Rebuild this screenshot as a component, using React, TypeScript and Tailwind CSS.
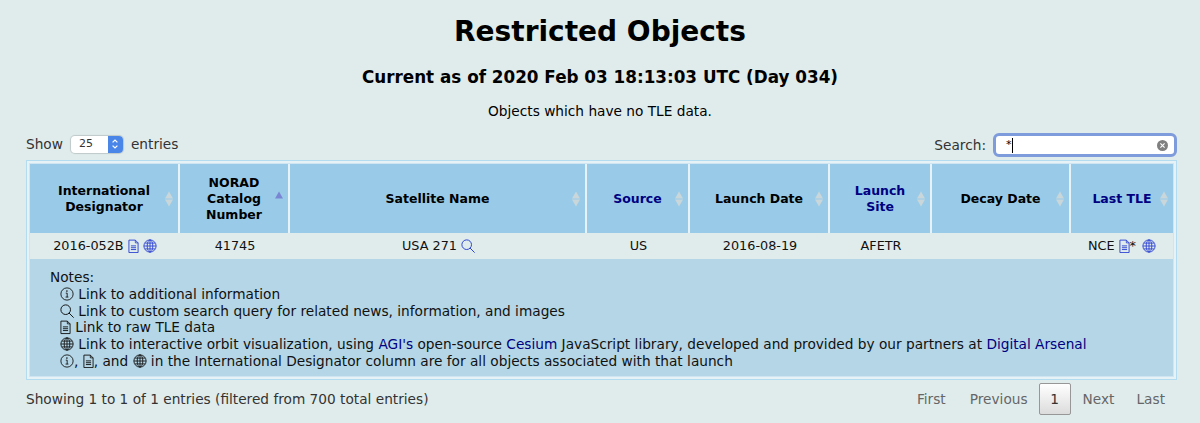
const FONT = "font-['DejaVu_Sans','Liberation_Sans',sans-serif]";

function DocIcon({ className = "" }: { className?: string }) {
  return (
    <svg viewBox="2 0 12 16" width="11" height="14.7" fill="none" className={`inline-block ${className}`} stroke="currentColor">
      <path d="M3 1.2h7l3 3v10.6H3z" strokeWidth="1" />
      <path d="M10 1.2v3h3" strokeWidth="0.9" />
      <path d="M5.2 7.5h5.6M5.2 9.5h5.6M5.2 11.5h5.6" strokeWidth="1" />
    </svg>
  );
}
function GlobeIcon({ className = "" }: { className?: string }) {
  return (
    <svg viewBox="0 0 16 16" width="14" height="14" fill="none" className={`inline-block ${className}`} stroke="currentColor" strokeWidth="1">
      <circle cx="8" cy="8" r="7" />
      <ellipse cx="8" cy="8" rx="3.2" ry="7" />
      <path d="M8 1v14M1 8h14M2.2 4.7h11.6M2.2 11.3h11.6" />
    </svg>
  );
}
function SearchIcon({ className = "" }: { className?: string }) {
  return (
    <svg viewBox="0 0 16 16" width="14" height="14" fill="none" className={`inline-block ${className}`} stroke="currentColor" strokeWidth="1.1">
      <circle cx="6.5" cy="6.5" r="5.5" />
      <path d="M10.5 10.5l4.8 4.8" strokeLinecap="round" />
    </svg>
  );
}
function InfoIcon({ className = "" }: { className?: string }) {
  return (
    <svg viewBox="0 0 16 16" width="14" height="14" fill="none" className={`inline-block ${className}`} stroke="currentColor" strokeWidth="1">
      <circle cx="8" cy="8" r="7" />
      <path d="M6.6 7h1.6v4.4M6.4 11.5h3.2" />
      <circle cx="7.9" cy="4.7" r=".9" fill="currentColor" stroke="none" />
    </svg>
  );
}
function SortIcon({ active }: { active?: boolean }) {
  return (
    <span className="absolute top-1/2 right-[5px] flex -translate-y-1/2 flex-col gap-[1px]">
      <span className={`h-0 w-0 border-x-[4px] border-b-[7px] border-x-transparent ${active ? "border-b-[#7a86d4]" : "border-b-[#c9d6da]"}`} />
      <span className={`h-0 w-0 border-x-[4px] border-t-[7px] border-x-transparent ${active ? "border-t-transparent" : "border-t-[#c9d6da]"}`} />
    </span>
  );
}

const cols: { label: React.ReactNode; w: string; link?: boolean; active?: boolean }[] = [
  { label: <>International<br />Designator</>, w: "w-[150px]" },
  { label: <>NORAD<br />Catalog<br />Number</>, w: "w-[110px]", active: true },
  { label: "Satellite Name", w: "w-[297px]" },
  { label: "Source", w: "w-[103px]", link: true },
  { label: "Launch Date", w: "w-[140px]" },
  { label: <>Launch<br />Site</>, w: "w-[102px]", link: true },
  { label: "Decay Date", w: "w-[139px]" },
  { label: "Last TLE", w: "w-[102px]", link: true },
];

export default function App() {
  const rowIcon = "-mt-[2px] align-middle text-[#2a3fd0]";
  const noteIcon = "-mt-[2px] align-middle";
  return (
    <div className={`${FONT} h-[423px] w-[1200px] overflow-hidden bg-[#e0ecec] text-[13.7px] text-black`}>
      <h1 className="pt-[12px] text-center text-[28px] leading-[40px] font-bold">Restricted Objects</h1>
      <h2 className="mt-[12px] text-center text-[16.8px] leading-[26px] font-bold">Current as of 2020 Feb 03 18:13:03 UTC (Day 034)</h2>
      <p className="mt-[12px] text-center text-[13.7px] leading-[18px]">Objects which have no TLE data.</p>

      <div className="mt-[9px] mr-[23px] ml-[26px] flex h-[30px] items-center justify-between pt-[2px] text-[#333]">
        <div className="-mt-px flex items-center">
          <span>Show</span>
          <span className="relative ml-[8px] flex h-[17px] w-[52px] items-center rounded-[4px] bg-white pl-[8px] text-[11px] shadow-[0_0_1px_1px_rgba(0,0,0,0.15)]">
            25
            <span className="absolute top-0 right-0 flex h-[17px] w-[15px] items-center justify-center rounded-r-[4px] bg-[#4a86e8]">
              <svg viewBox="0 0 10 14" width="8" height="12" fill="none" stroke="white" strokeWidth="1.5">
                <path d="M2 5l3-3 3 3M2 9l3 3 3-3" />
              </svg>
            </span>
          </span>
          <span className="ml-[8px]">entries</span>
        </div>
        <div className="flex items-center">
          <span>Search:</span>
          <span className="relative ml-[7px] flex h-[24px] w-[184px] items-center rounded-[6px] border-[3px] border-[#7e9bdc] bg-white pl-[10px] text-[11px] text-black">
            <span>*</span>
            <span className="h-[15px] w-px bg-black" />
            <span className="absolute right-[6px] flex h-[11px] w-[11px] items-center justify-center rounded-full bg-[#808080]">
              <svg viewBox="0 0 10 10" width="7" height="7" stroke="white" strokeWidth="1.6"><path d="M2 2l6 6M8 2l-6 6" /></svg>
            </span>
          </span>
        </div>
      </div>

      <div className="mt-[1px] mr-[23px] ml-[26px] border-[1px] border-[#b4dcf0] bg-[#e6f2f6] p-[2px]">
        <div className="border border-[#cfe6f2]">
          <table className="w-full table-fixed border-separate border-spacing-0">
            <thead>
              <tr>
                {cols.map((c, i) => (
                  <th
                    key={i}
                    className={`relative h-[69px] border-r-[2px] border-[#e6f2f6] bg-[#99cbe8] p-0 text-center text-[12.5px] leading-[16px] font-bold last:border-r-0 ${c.w} ${c.link ? "text-[#000080]" : "text-black"}`}
                  >
                    {c.label}
                    <SortIcon active={c.active} />
                  </th>
                ))}
              </tr>
            </thead>
            <tbody>
              <tr className="h-[26px] bg-[#e0ecec] text-center text-[12.8px] text-[#111]">
                <td>2016-052B <DocIcon className={rowIcon} /> <GlobeIcon className={rowIcon} /></td>
                <td>41745</td>
                <td>USA 271 <SearchIcon className={rowIcon} /></td>
                <td>US</td>
                <td>2016-08-19</td>
                <td>AFETR</td>
                <td></td>
                <td>NCE <DocIcon className={rowIcon} />* <GlobeIcon className={`${rowIcon} ml-[2px]`} /></td>
              </tr>
              <tr className="bg-[#b4d6e6]">
                <td colSpan={8} className="h-[117px] pt-[10px] pl-[20px] align-top text-[13.7px] leading-[16.8px] text-[#111]">
                  <div>Notes:</div>
                  <div className="pl-[10px]"><InfoIcon className={noteIcon} /> Link to additional information</div>
                  <div className="pl-[10px]"><SearchIcon className={noteIcon} /> Link to custom search query for related news, information, and images</div>
                  <div className="pl-[10px]"><DocIcon className={noteIcon} /> Link to raw TLE data</div>
                  <div className="pl-[10px]"><GlobeIcon className={noteIcon} /> Link to interactive orbit visualization, using <span className="text-[#000080]">AGI's</span> open-source <span className="text-[#000080]">Cesium</span> JavaScript library, developed and provided by our partners at <span className="text-[#000080]">Digital Arsenal</span></div>
                  <div className="pl-[10px]"><InfoIcon className={noteIcon} />, <DocIcon className={noteIcon} />, and <GlobeIcon className={noteIcon} /> in the International Designator column are for all objects associated with that launch</div>
                </td>
              </tr>
            </tbody>
          </table>
        </div>
      </div>

      <div className="mt-[3px] mr-[24px] ml-[26px] flex items-center justify-between text-[#333]">
        <span>Showing 1 to 1 of 1 entries (filtered from 700 total entries)</span>
        <div className="flex items-center text-[#666]">
          <span className="px-[11px]">First</span>
          <span className="pr-[11px] pl-[13px]">Previous</span>
          <span className="flex h-[32px] w-[32px] items-center justify-center rounded-[2px] border border-[#979797] bg-gradient-to-b from-white to-[#dcdcdc] text-[#333]">1</span>
          <span className="pr-[11px] pl-[12px]">Next</span>
          <span className="px-[11px]">Last</span>
        </div>
      </div>
    </div>
  );
}
